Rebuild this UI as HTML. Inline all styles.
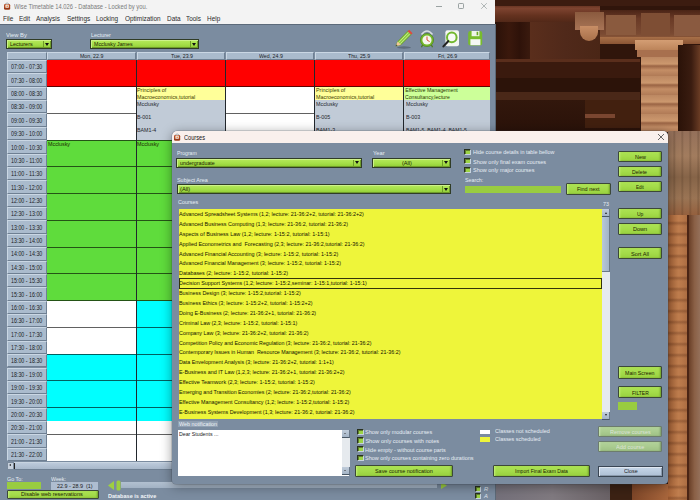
<!DOCTYPE html><html><head><meta charset="utf-8"><style>
*{margin:0;padding:0;box-sizing:border-box}
html,body{width:700px;height:500px;overflow:hidden}
body{position:relative;font-family:"Liberation Sans",sans-serif;background:#2f170c}
.ab{position:absolute}
.t{position:absolute;white-space:nowrap;line-height:1}
.btn{position:absolute;border:1px solid #3c4838;border-radius:1px;
 background:linear-gradient(#ace254,#a4dc4a 50%,#9cd442 85%,#88bc36);
 box-shadow:inset 2px 0 2px -1px #c4f07a, inset -2px 0 2px -1px #6e9e28}
.dis{position:absolute;border:1px solid #6c7c6c;border-radius:1px;background:linear-gradient(#b2d29a,#aacc90 50%,#a2c488 85%,#94b67c);box-shadow:inset 2px 0 2px -1px #c8e4b4, inset -2px 0 2px -1px #7a9a68}
.blu{position:absolute;border:1px solid #3a4654;background:linear-gradient(#c6d6e8,#adbfd4);box-shadow:inset 1px 1px 0 #e0e8f2, inset -1px -1px 0 #8a9aac}
.dd{position:absolute;border:1px solid #303c26;
 background:linear-gradient(#b6ea5c,#a4de48 55%,#90cc34);
 box-shadow:inset 1px 1px 0 #cdf28a, inset -1px -1px 0 #6f9c2a}
.arr{position:absolute;border-left:2.2px solid transparent;border-right:2.2px solid transparent;border-top:3px solid #111}
.sep{position:absolute;width:1px;background:#6f9c2a}
.cb{position:absolute;width:6.4px;height:6.4px;background:#9cd446;border-top:1px solid #283020;border-left:1px solid #283020;border-right:1px solid #c6d2de;border-bottom:1px solid #c6d2de;box-shadow:inset 1px 1px 0 #5e7e2a}
.tc{position:absolute;background:#aabbcd;border-top:1px solid #cad7e4;border-left:1px solid #cad7e4;border-right:1px solid #6e7f92;border-bottom:1px solid #6e7f92}
.hl{position:absolute;height:1px;background:rgba(0,0,0,.62)}
</style></head><body>
<div class="ab" style="left:495.00px;top:0.00px;width:205.00px;height:500.00px;background:#30150b"></div>
<div class="ab" style="left:495.00px;top:0.00px;width:205.00px;height:6.00px;background:#3c1c10"></div>
<div class="ab" style="left:495.00px;top:6.00px;width:105.00px;height:16.00px;background:linear-gradient(#6a3624,#7e4430 15%,#64321f 60%,#522818)"></div>
<div class="ab" style="left:495.00px;top:22.00px;width:35.00px;height:40.00px;background:linear-gradient(90deg,#2a1108,#3a180c 40%,#2e1209 70%,#3a1a0e)"></div>
<div class="ab" style="left:530.00px;top:22.00px;width:70.00px;height:40.00px;background:linear-gradient(90deg,#5a2e1c,#50291a 50%,#4a2616)"></div>
<div class="ab" style="left:495.00px;top:59.00px;width:145.00px;height:3.00px;background:#5a2e1c"></div>
<div class="ab" style="left:495.00px;top:62.00px;width:145.00px;height:16.00px;background:#3a1a0e"></div>
<div class="ab" style="left:495.00px;top:78.00px;width:145.00px;height:14.00px;background:#2c1309"></div>
<div class="ab" style="left:495.00px;top:92.00px;width:145.00px;height:8.00px;background:#4a2818"></div>
<div class="ab" style="left:495.00px;top:100.00px;width:145.00px;height:32.00px;background:linear-gradient(#32170c,#2a1209)"></div>
<div class="ab" style="left:585.00px;top:100.00px;width:55.00px;height:28.00px;background:#42200f"></div>
<div class="ab" style="left:585.00px;top:114.00px;width:30.00px;height:4.00px;background:#7a4630"></div>
<div class="ab" style="left:600.00px;top:10.00px;width:100.00px;height:34.00px;background:linear-gradient(#4a2416,#6a3a26 25%,#7a4a32 70%,#a06840)"></div>
<div class="ab" style="left:606.00px;top:15.00px;width:30.00px;height:20.00px;background:#8a5a3e"></div>
<div class="ab" style="left:641.00px;top:13.00px;width:29.00px;height:23.00px;background:#7e4e34"></div>
<div class="ab" style="left:674.00px;top:15.00px;width:26.00px;height:21.00px;background:#8a5a40"></div>
<div class="ab" style="left:600.00px;top:37.00px;width:100.00px;height:7.00px;background:linear-gradient(#a87048,#8a5434)"></div>
<div class="ab" style="left:575.00px;top:12.00px;width:29.00px;height:18.00px;background:linear-gradient(#8a5a3e,#a87456)"></div>
<div class="ab" style="left:580px;top:26px;width:18px;height:15px;border-radius:0 0 9px 9px;background:linear-gradient(#c88e66,#a8704a)"></div>
<div class="ab" style="left:635.00px;top:40.00px;width:48.00px;height:10.00px;background:linear-gradient(#d49e74,#bc845a)"></div>
<div class="ab" style="left:637.00px;top:50.00px;width:44.00px;height:7.00px;background:#a8704e"></div>
<div class="ab" style="left:641.00px;top:57.00px;width:37.00px;height:75.00px;background:repeating-linear-gradient(#bc8862 0,#cc986e 7px,#9a6444 9px,#c48e66 13px,#b07a56 19px)"></div>
<div class="ab" style="left:678.00px;top:45.00px;width:22.00px;height:87.00px;background:linear-gradient(90deg,#2a1208,#3a1c10 60%,#6a3c24)"></div>
<div class="ab" style="left:668.00px;top:131.00px;width:32.00px;height:84.00px;background:linear-gradient(#94705a,#a27c5e 30%,#866448 55%,#9a7454 80%,#94603e)"></div>
<div class="ab" style="left:668.00px;top:131.00px;width:32.00px;height:84.00px;background:repeating-linear-gradient(90deg,#0000 0,#0000 5px,rgba(50,30,15,.22) 6px,#0000 8px)"></div>
<div class="ab" style="left:668.00px;top:215.00px;width:21.00px;height:285.00px;background:linear-gradient(90deg,#a86438,#c07e4e 50%,#a86a40)"></div>
<div class="ab" style="left:668.00px;top:215.00px;width:21.00px;height:285.00px;background:repeating-linear-gradient(#0000 0,#0000 6px,rgba(70,30,12,.28) 8px,#0000 11px)"></div>
<div class="ab" style="left:687.00px;top:215.00px;width:2.00px;height:285.00px;background:#4a2414"></div>
<div class="ab" style="left:689.00px;top:215.00px;width:11.00px;height:285.00px;background:linear-gradient(90deg,#6a4028,#8a6046 50%,#94705a)"></div>
<div class="ab" style="left:495.00px;top:484.00px;width:115.00px;height:16.00px;background:linear-gradient(90deg,#74707a,#807a80 50%,#6a6266)"></div>
<div class="ab" style="left:610.00px;top:484.00px;width:22.00px;height:16.00px;background:#3c2214"></div>
<div class="ab" style="left:632.00px;top:484.00px;width:36.00px;height:16.00px;background:linear-gradient(90deg,#7e4628,#a8663c)"></div>
<div class="ab" style="left:0.00px;top:0.00px;width:495.00px;height:500.00px;background:#7b8ca0"></div>
<div class="ab" style="left:495.00px;top:24.00px;width:1.00px;height:476.00px;background:#5d6a78"></div>
<div class="ab" style="left:0.00px;top:0.00px;width:495.00px;height:24.00px;background:#f3f3f3"></div>
<div class="ab" style="left:0.00px;top:23.60px;width:495.00px;height:1.00px;background:#5c6a7a"></div>
<svg class="ab" style="left:3.0px;top:1.2999999999999998px" width="9" height="10" viewBox="-1 -1 9 10"><path d="M1.2 2 Q3.1 -0.2 5 2" fill="none" stroke="#a8b0b4" stroke-width="1"/><rect x="0" y="1.9" width="6.2" height="5.6" rx="1.4" fill="#b04a22"/><rect x="0" y="5.6" width="6.2" height="1.9" rx=".8" fill="#983a18"/><rect x="1.4" y="2.6" width="3.4" height="3.1" rx=".5" fill="#f4ece6"/><circle cx="3.2" cy="4.2" r=".8" fill="#f08030"/></svg>
<div class="t" style="left:14.30px;top:4.00px;font-size:6.50px;color:#7a7a7a;transform:scaleX(0.893);transform-origin:0 0;">Wise Timetable 14.026 - Database - Locked by you.</div>
<div class="ab" style="left:436.00px;top:6.00px;width:6.00px;height:0.80px;background:#9aa2a2"></div>
<div class="ab" style="left:458px;top:3px;width:6px;height:6px;border:0.8px solid #9aa2a2;border-radius:1.2px"></div>
<svg class="ab" style="left:480px;top:2px" width="8" height="8"><path d="M1.2 1.2L6.8 6.8M6.8 1.2L1.2 6.8" stroke="#9aa2a2" stroke-width="0.75"/></svg>
<div class="t" style="left:2.70px;top:15.00px;font-size:7.30px;color:#2c2c2c;transform:scaleX(0.880);transform-origin:0 0;">File</div>
<div class="t" style="left:18.90px;top:15.00px;font-size:7.30px;color:#2c2c2c;transform:scaleX(0.880);transform-origin:0 0;">Edit</div>
<div class="t" style="left:36.10px;top:15.00px;font-size:7.30px;color:#2c2c2c;transform:scaleX(0.880);transform-origin:0 0;">Analysis</div>
<div class="t" style="left:67.00px;top:15.00px;font-size:7.30px;color:#2c2c2c;transform:scaleX(0.880);transform-origin:0 0;">Settings</div>
<div class="t" style="left:96.40px;top:15.00px;font-size:7.30px;color:#2c2c2c;transform:scaleX(0.880);transform-origin:0 0;">Locking</div>
<div class="t" style="left:125.00px;top:15.00px;font-size:7.30px;color:#2c2c2c;transform:scaleX(0.880);transform-origin:0 0;">Optimization</div>
<div class="t" style="left:167.00px;top:15.00px;font-size:7.30px;color:#2c2c2c;transform:scaleX(0.880);transform-origin:0 0;">Data</div>
<div class="t" style="left:186.00px;top:15.00px;font-size:7.30px;color:#2c2c2c;transform:scaleX(0.880);transform-origin:0 0;">Tools</div>
<div class="t" style="left:207.00px;top:15.00px;font-size:7.30px;color:#2c2c2c;transform:scaleX(0.880);transform-origin:0 0;">Help</div>
<div class="t" style="left:6.20px;top:32.00px;font-size:6.00px;color:#e6edf4;transform:scaleX(0.965);transform-origin:0 0;">View By</div>
<div class="dd" style="left:6.00px;top:39.10px;width:46.40px;height:9.70px"></div>
<div class="ab" style="left:43.20px;top:41.10px;width:1.00px;height:5.70px;background:#6f9c2a"></div>
<div class="arr" style="left:45.40px;top:42.50px"></div>
<div class="t" style="left:9.90px;top:42.00px;font-size:5.90px;color:#1c2200;transform:scaleX(0.923);transform-origin:0 0;">Lecturers</div>
<div class="t" style="left:90.80px;top:32.00px;font-size:6.00px;color:#e6edf4;transform:scaleX(0.904);transform-origin:0 0;">Lecturer</div>
<div class="dd" style="left:90.10px;top:39.10px;width:108.70px;height:9.70px"></div>
<div class="ab" style="left:189.60px;top:41.10px;width:1.00px;height:5.70px;background:#6f9c2a"></div>
<div class="arr" style="left:191.80px;top:42.50px"></div>
<div class="t" style="left:94.00px;top:42.00px;font-size:5.90px;color:#1c2200;transform:scaleX(0.892);transform-origin:0 0;">Mcclusky James</div>
<svg class="ab" style="left:390px;top:24px" width="105" height="28" viewBox="390 24 105 28">
<ellipse cx="404" cy="47.5" rx="7" ry="1.2" fill="rgba(40,50,60,.35)"/>
<path d="M395.8 46.2 L397.6 41.6 L407.6 31.2 L411.2 34.6 L401.0 44.8 Z" fill="#8ccc3c" stroke="#5a8a22" stroke-width=".5"/>
<path d="M398.6 42.6 L408.6 32.2 M400.2 43.8 L410.0 33.6" stroke="#d8f0b0" stroke-width=".7"/>
<path d="M407.6 31.2 L409.2 29.8 L412.6 33.2 L411.2 34.6 Z" fill="#e24a3a"/>
<path d="M395.8 46.2 L397.6 41.6 L401.0 44.8 Z" fill="#f2c89a"/>
<path d="M395.8 46.2 L396.5 44.4 L397.6 45.4 Z" fill="#333"/>
<path d="M421.5 34.5 Q427 27.5 432.5 34.5" fill="none" stroke="#d8dde2" stroke-width="1.6"/>
<circle cx="427" cy="40" r="6.6" fill="#74b82a" stroke="#4a7a1a" stroke-width=".6"/>
<circle cx="427" cy="40" r="4.6" fill="#f6f6ee"/>
<path d="M427 36.6 V40 L429.6 41.6" stroke="#d23a22" stroke-width=".9" fill="none"/>
<path d="M422.5 45 L421.5 47.2 M431.5 45 L432.5 47.2" stroke="#4a7a1a" stroke-width="1.2"/>
<rect x="445.4" y="30.2" width="13.6" height="16" rx="2" fill="#f4f6f2"/>
<circle cx="451.8" cy="37.4" r="4.8" fill="#f8faf6" stroke="#72b830" stroke-width="2"/>
<path d="M448.2 41.2 L443.4 46.4" stroke="#222" stroke-width="2.1" stroke-linecap="round"/>
<rect x="468.2" y="31" width="14" height="14.4" rx="2.2" fill="#78bc2c"/>
<rect x="471.6" y="31" width="7.8" height="5.2" fill="#eef4e8"/>
<rect x="476.6" y="31.8" width="1.6" height="3.4" fill="#6aa824"/>
<rect x="470.4" y="39.2" width="10" height="6" fill="#f6f8f4"/>
</svg>
<div class="tc" style="left:7px;top:52px;width:40px;height:8px"></div>
<div class="tc" style="left:47px;top:52px;width:89px;height:8px"></div>
<div class="t" style="left:80.32px;top:54.00px;font-size:5.90px;color:#1a1e26;transform:scaleX(0.890);transform-origin:0 0;">Mon, 22.9</div>
<div class="tc" style="left:137px;top:52px;width:88px;height:8px"></div>
<div class="t" style="left:170.50px;top:54.00px;font-size:5.90px;color:#1a1e26;transform:scaleX(0.890);transform-origin:0 0;">Tue, 23.9</div>
<div class="tc" style="left:226px;top:52px;width:88px;height:8px"></div>
<div class="t" style="left:258.58px;top:54.00px;font-size:5.90px;color:#1a1e26;transform:scaleX(0.890);transform-origin:0 0;">Wed, 24.9</div>
<div class="tc" style="left:315px;top:52px;width:88px;height:8px"></div>
<div class="t" style="left:348.41px;top:54.00px;font-size:5.90px;color:#1a1e26;transform:scaleX(0.890);transform-origin:0 0;">Thu, 25.9</div>
<div class="tc" style="left:404px;top:52px;width:86px;height:8px"></div>
<div class="t" style="left:437.87px;top:54.00px;font-size:5.90px;color:#1a1e26;transform:scaleX(0.890);transform-origin:0 0;">Fri, 26.9</div>
<div class="tc" style="left:7px;top:60.00px;width:40px;height:13.37px"></div>
<div class="t" style="left:11.05px;top:64.00px;font-size:6.50px;color:#1a1e26;transform:scaleX(0.817);transform-origin:0 0;">07:00 - 07:30</div>
<div class="tc" style="left:7px;top:73.37px;width:40px;height:13.37px"></div>
<div class="t" style="left:11.05px;top:78.00px;font-size:6.50px;color:#1a1e26;transform:scaleX(0.817);transform-origin:0 0;">07:30 - 08:00</div>
<div class="tc" style="left:7px;top:86.74px;width:40px;height:13.37px"></div>
<div class="t" style="left:11.05px;top:91.00px;font-size:6.50px;color:#1a1e26;transform:scaleX(0.817);transform-origin:0 0;">08:00 - 08:30</div>
<div class="tc" style="left:7px;top:100.11px;width:40px;height:13.37px"></div>
<div class="t" style="left:11.05px;top:104.00px;font-size:6.50px;color:#1a1e26;transform:scaleX(0.817);transform-origin:0 0;">08:30 - 09:00</div>
<div class="tc" style="left:7px;top:113.48px;width:40px;height:13.37px"></div>
<div class="t" style="left:11.05px;top:118.00px;font-size:6.50px;color:#1a1e26;transform:scaleX(0.817);transform-origin:0 0;">09:00 - 09:30</div>
<div class="tc" style="left:7px;top:126.85px;width:40px;height:13.37px"></div>
<div class="t" style="left:11.05px;top:131.00px;font-size:6.50px;color:#1a1e26;transform:scaleX(0.817);transform-origin:0 0;">09:30 - 10:00</div>
<div class="tc" style="left:7px;top:140.22px;width:40px;height:13.37px"></div>
<div class="t" style="left:11.05px;top:145.00px;font-size:6.50px;color:#1a1e26;transform:scaleX(0.817);transform-origin:0 0;">10:00 - 10:30</div>
<div class="tc" style="left:7px;top:153.59px;width:40px;height:13.37px"></div>
<div class="t" style="left:11.05px;top:158.00px;font-size:6.50px;color:#1a1e26;transform:scaleX(0.828);transform-origin:0 0;">10:30 - 11:00</div>
<div class="tc" style="left:7px;top:166.96px;width:40px;height:13.37px"></div>
<div class="t" style="left:11.05px;top:171.00px;font-size:6.50px;color:#1a1e26;transform:scaleX(0.838);transform-origin:0 0;">11:00 - 11:30</div>
<div class="tc" style="left:7px;top:180.33px;width:40px;height:13.37px"></div>
<div class="t" style="left:11.05px;top:185.00px;font-size:6.50px;color:#1a1e26;transform:scaleX(0.828);transform-origin:0 0;">11:30 - 12:00</div>
<div class="tc" style="left:7px;top:193.70px;width:40px;height:13.37px"></div>
<div class="t" style="left:11.05px;top:198.00px;font-size:6.50px;color:#1a1e26;transform:scaleX(0.817);transform-origin:0 0;">12:00 - 12:30</div>
<div class="tc" style="left:7px;top:207.07px;width:40px;height:13.37px"></div>
<div class="t" style="left:11.05px;top:211.00px;font-size:6.50px;color:#1a1e26;transform:scaleX(0.817);transform-origin:0 0;">12:30 - 13:00</div>
<div class="tc" style="left:7px;top:220.44px;width:40px;height:13.37px"></div>
<div class="t" style="left:11.05px;top:225.00px;font-size:6.50px;color:#1a1e26;transform:scaleX(0.817);transform-origin:0 0;">13:00 - 13:30</div>
<div class="tc" style="left:7px;top:233.81px;width:40px;height:13.37px"></div>
<div class="t" style="left:11.05px;top:238.00px;font-size:6.50px;color:#1a1e26;transform:scaleX(0.817);transform-origin:0 0;">13:30 - 14:00</div>
<div class="tc" style="left:7px;top:247.18px;width:40px;height:13.37px"></div>
<div class="t" style="left:11.05px;top:251.00px;font-size:6.50px;color:#1a1e26;transform:scaleX(0.817);transform-origin:0 0;">14:00 - 14:30</div>
<div class="tc" style="left:7px;top:260.55px;width:40px;height:13.37px"></div>
<div class="t" style="left:11.05px;top:265.00px;font-size:6.50px;color:#1a1e26;transform:scaleX(0.817);transform-origin:0 0;">14:30 - 15:00</div>
<div class="tc" style="left:7px;top:273.92px;width:40px;height:13.37px"></div>
<div class="t" style="left:11.05px;top:278.00px;font-size:6.50px;color:#1a1e26;transform:scaleX(0.817);transform-origin:0 0;">15:00 - 15:30</div>
<div class="tc" style="left:7px;top:287.29px;width:40px;height:13.37px"></div>
<div class="t" style="left:11.05px;top:292.00px;font-size:6.50px;color:#1a1e26;transform:scaleX(0.817);transform-origin:0 0;">15:30 - 16:00</div>
<div class="tc" style="left:7px;top:300.66px;width:40px;height:13.37px"></div>
<div class="t" style="left:11.05px;top:305.00px;font-size:6.50px;color:#1a1e26;transform:scaleX(0.817);transform-origin:0 0;">16:00 - 16:30</div>
<div class="tc" style="left:7px;top:314.03px;width:40px;height:13.37px"></div>
<div class="t" style="left:11.05px;top:318.00px;font-size:6.50px;color:#1a1e26;transform:scaleX(0.817);transform-origin:0 0;">16:30 - 17:00</div>
<div class="tc" style="left:7px;top:327.40px;width:40px;height:13.37px"></div>
<div class="t" style="left:11.05px;top:332.00px;font-size:6.50px;color:#1a1e26;transform:scaleX(0.817);transform-origin:0 0;">17:00 - 17:30</div>
<div class="tc" style="left:7px;top:340.77px;width:40px;height:13.37px"></div>
<div class="t" style="left:11.05px;top:345.00px;font-size:6.50px;color:#1a1e26;transform:scaleX(0.817);transform-origin:0 0;">17:30 - 18:00</div>
<div class="tc" style="left:7px;top:354.14px;width:40px;height:13.37px"></div>
<div class="t" style="left:11.05px;top:358.00px;font-size:6.50px;color:#1a1e26;transform:scaleX(0.817);transform-origin:0 0;">18:00 - 18:30</div>
<div class="tc" style="left:7px;top:367.51px;width:40px;height:13.37px"></div>
<div class="t" style="left:11.05px;top:372.00px;font-size:6.50px;color:#1a1e26;transform:scaleX(0.817);transform-origin:0 0;">18:30 - 19:00</div>
<div class="tc" style="left:7px;top:380.88px;width:40px;height:13.37px"></div>
<div class="t" style="left:11.05px;top:385.00px;font-size:6.50px;color:#1a1e26;transform:scaleX(0.817);transform-origin:0 0;">19:00 - 19:30</div>
<div class="tc" style="left:7px;top:394.25px;width:40px;height:13.37px"></div>
<div class="t" style="left:11.05px;top:399.00px;font-size:6.50px;color:#1a1e26;transform:scaleX(0.817);transform-origin:0 0;">19:30 - 20:00</div>
<div class="tc" style="left:7px;top:407.62px;width:40px;height:13.37px"></div>
<div class="t" style="left:11.05px;top:412.00px;font-size:6.50px;color:#1a1e26;transform:scaleX(0.817);transform-origin:0 0;">20:00 - 20:30</div>
<div class="tc" style="left:7px;top:420.99px;width:40px;height:13.37px"></div>
<div class="t" style="left:11.05px;top:425.00px;font-size:6.50px;color:#1a1e26;transform:scaleX(0.817);transform-origin:0 0;">20:30 - 21:00</div>
<div class="tc" style="left:7px;top:434.36px;width:40px;height:13.37px"></div>
<div class="t" style="left:11.05px;top:439.00px;font-size:6.50px;color:#1a1e26;transform:scaleX(0.817);transform-origin:0 0;">21:00 - 21:30</div>
<div class="tc" style="left:7px;top:447.73px;width:40px;height:13.37px"></div>
<div class="t" style="left:11.05px;top:452.00px;font-size:6.50px;color:#1a1e26;transform:scaleX(0.817);transform-origin:0 0;">21:30 - 22:00</div>
<div class="ab" style="left:47.00px;top:60.00px;width:89.00px;height:26.74px;background:#ff0000"></div>
<div class="ab" style="left:47.00px;top:86.74px;width:89.00px;height:53.48px;background:#ffffff"></div>
<div class="ab" style="left:47.00px;top:140.22px;width:89.00px;height:160.44px;background:#5fdc3c"></div>
<div class="ab" style="left:47.00px;top:300.66px;width:89.00px;height:53.48px;background:#ffffff"></div>
<div class="ab" style="left:47.00px;top:354.14px;width:89.00px;height:66.85px;background:#00ffff"></div>
<div class="ab" style="left:47.00px;top:420.99px;width:89.00px;height:40.11px;background:#ffffff"></div>
<div class="ab" style="left:137.00px;top:60.00px;width:88.00px;height:26.74px;background:#ff0000"></div>
<div class="ab" style="left:137.00px;top:86.74px;width:88.00px;height:53.48px;background:#c1cbd7"></div>
<div class="ab" style="left:137.00px;top:140.22px;width:88.00px;height:160.44px;background:#5fdc3c"></div>
<div class="ab" style="left:137.00px;top:300.66px;width:88.00px;height:120.33px;background:#00ffff"></div>
<div class="ab" style="left:137.00px;top:420.99px;width:88.00px;height:40.11px;background:#ffffff"></div>
<div class="ab" style="left:226.00px;top:60.00px;width:88.00px;height:26.74px;background:#ff0000"></div>
<div class="ab" style="left:226.00px;top:86.74px;width:88.00px;height:374.36px;background:#ffffff"></div>
<div class="ab" style="left:315.00px;top:60.00px;width:88.00px;height:26.74px;background:#ff0000"></div>
<div class="ab" style="left:315.00px;top:86.74px;width:88.00px;height:53.48px;background:#c1cbd7"></div>
<div class="ab" style="left:315.00px;top:140.22px;width:88.00px;height:320.88px;background:#ffffff"></div>
<div class="ab" style="left:404.00px;top:60.00px;width:86.00px;height:26.74px;background:#ff0000"></div>
<div class="ab" style="left:404.00px;top:86.74px;width:86.00px;height:53.48px;background:#c1cbd7"></div>
<div class="ab" style="left:404.00px;top:140.22px;width:86.00px;height:320.88px;background:#ffffff"></div>
<div class="ab" style="left:137.00px;top:86.74px;width:88.00px;height:13.26px;background:#ffff99"></div>
<div class="ab" style="left:315.00px;top:86.74px;width:88.00px;height:13.26px;background:#ffff99"></div>
<div class="ab" style="left:404.00px;top:86.74px;width:86.00px;height:13.26px;background:#ccff99"></div>
<div class="hl" style="left:47px;top:86.24px;width:89px"></div>
<div class="hl" style="left:137px;top:86.24px;width:88px"></div>
<div class="hl" style="left:226px;top:86.24px;width:88px"></div>
<div class="hl" style="left:315px;top:86.24px;width:88px"></div>
<div class="hl" style="left:404px;top:86.24px;width:86px"></div>
<div class="hl" style="left:47px;top:112.98px;width:89px"></div>
<div class="hl" style="left:226px;top:112.98px;width:88px"></div>
<div class="hl" style="left:47px;top:139.72px;width:89px"></div>
<div class="hl" style="left:137px;top:139.72px;width:88px"></div>
<div class="hl" style="left:226px;top:139.72px;width:88px"></div>
<div class="hl" style="left:315px;top:139.72px;width:88px"></div>
<div class="hl" style="left:404px;top:139.72px;width:86px"></div>
<div class="hl" style="left:47px;top:166.46px;width:89px"></div>
<div class="hl" style="left:137px;top:166.46px;width:88px"></div>
<div class="hl" style="left:226px;top:166.46px;width:88px"></div>
<div class="hl" style="left:315px;top:166.46px;width:88px"></div>
<div class="hl" style="left:404px;top:166.46px;width:86px"></div>
<div class="hl" style="left:47px;top:193.20px;width:89px"></div>
<div class="hl" style="left:137px;top:193.20px;width:88px"></div>
<div class="hl" style="left:226px;top:193.20px;width:88px"></div>
<div class="hl" style="left:315px;top:193.20px;width:88px"></div>
<div class="hl" style="left:404px;top:193.20px;width:86px"></div>
<div class="hl" style="left:47px;top:219.94px;width:89px"></div>
<div class="hl" style="left:137px;top:219.94px;width:88px"></div>
<div class="hl" style="left:226px;top:219.94px;width:88px"></div>
<div class="hl" style="left:315px;top:219.94px;width:88px"></div>
<div class="hl" style="left:404px;top:219.94px;width:86px"></div>
<div class="hl" style="left:47px;top:246.68px;width:89px"></div>
<div class="hl" style="left:137px;top:246.68px;width:88px"></div>
<div class="hl" style="left:226px;top:246.68px;width:88px"></div>
<div class="hl" style="left:315px;top:246.68px;width:88px"></div>
<div class="hl" style="left:404px;top:246.68px;width:86px"></div>
<div class="hl" style="left:47px;top:273.42px;width:89px"></div>
<div class="hl" style="left:137px;top:273.42px;width:88px"></div>
<div class="hl" style="left:226px;top:273.42px;width:88px"></div>
<div class="hl" style="left:315px;top:273.42px;width:88px"></div>
<div class="hl" style="left:404px;top:273.42px;width:86px"></div>
<div class="hl" style="left:47px;top:300.16px;width:89px"></div>
<div class="hl" style="left:137px;top:300.16px;width:88px"></div>
<div class="hl" style="left:226px;top:300.16px;width:88px"></div>
<div class="hl" style="left:315px;top:300.16px;width:88px"></div>
<div class="hl" style="left:404px;top:300.16px;width:86px"></div>
<div class="hl" style="left:47px;top:326.90px;width:89px"></div>
<div class="hl" style="left:137px;top:326.90px;width:88px"></div>
<div class="hl" style="left:226px;top:326.90px;width:88px"></div>
<div class="hl" style="left:315px;top:326.90px;width:88px"></div>
<div class="hl" style="left:404px;top:326.90px;width:86px"></div>
<div class="hl" style="left:47px;top:353.64px;width:89px"></div>
<div class="hl" style="left:137px;top:353.64px;width:88px"></div>
<div class="hl" style="left:226px;top:353.64px;width:88px"></div>
<div class="hl" style="left:315px;top:353.64px;width:88px"></div>
<div class="hl" style="left:404px;top:353.64px;width:86px"></div>
<div class="hl" style="left:47px;top:380.38px;width:89px"></div>
<div class="hl" style="left:137px;top:380.38px;width:88px"></div>
<div class="hl" style="left:226px;top:380.38px;width:88px"></div>
<div class="hl" style="left:315px;top:380.38px;width:88px"></div>
<div class="hl" style="left:404px;top:380.38px;width:86px"></div>
<div class="hl" style="left:47px;top:407.12px;width:89px"></div>
<div class="hl" style="left:137px;top:407.12px;width:88px"></div>
<div class="hl" style="left:226px;top:407.12px;width:88px"></div>
<div class="hl" style="left:315px;top:407.12px;width:88px"></div>
<div class="hl" style="left:404px;top:407.12px;width:86px"></div>
<div class="hl" style="left:47px;top:433.86px;width:89px"></div>
<div class="hl" style="left:137px;top:433.86px;width:88px"></div>
<div class="hl" style="left:226px;top:433.86px;width:88px"></div>
<div class="hl" style="left:315px;top:433.86px;width:88px"></div>
<div class="hl" style="left:404px;top:433.86px;width:86px"></div>
<div class="ab" style="left:136.00px;top:60.00px;width:1.00px;height:401.00px;background:rgba(0,0,0,.72)"></div>
<div class="ab" style="left:225.00px;top:60.00px;width:1.00px;height:401.00px;background:rgba(0,0,0,.72)"></div>
<div class="ab" style="left:314.00px;top:60.00px;width:1.00px;height:401.00px;background:rgba(0,0,0,.72)"></div>
<div class="ab" style="left:403.00px;top:60.00px;width:1.00px;height:401.00px;background:rgba(0,0,0,.72)"></div>
<div class="t" style="left:136.80px;top:88.00px;font-size:5.30px;color:#3c3c00;transform:scaleX(1.018);transform-origin:0 0;">Principles of</div>
<div class="t" style="left:136.80px;top:95.00px;font-size:5.30px;color:#3c3c00;transform:scaleX(1.013);transform-origin:0 0;">Macroeconomics,tutorial</div>
<div class="t" style="left:136.80px;top:102.00px;font-size:5.30px;color:#23262c;transform:scaleX(1.010);transform-origin:0 0;">Mcclusky</div>
<div class="t" style="left:315.60px;top:88.00px;font-size:5.30px;color:#3c3c00;transform:scaleX(1.018);transform-origin:0 0;">Principles of</div>
<div class="t" style="left:315.60px;top:95.00px;font-size:5.30px;color:#3c3c00;transform:scaleX(1.013);transform-origin:0 0;">Macroeconomics,tutorial</div>
<div class="t" style="left:315.60px;top:102.00px;font-size:5.30px;color:#23262c;transform:scaleX(1.010);transform-origin:0 0;">Mcclusky</div>
<div class="t" style="left:136.80px;top:115.00px;font-size:5.60px;color:#23262c;transform:scaleX(0.950);transform-origin:0 0;">B-001</div>
<div class="t" style="left:136.80px;top:128.00px;font-size:5.60px;color:#23262c;transform:scaleX(0.949);transform-origin:0 0;">BAM1-4</div>
<div class="t" style="left:315.60px;top:115.00px;font-size:5.60px;color:#23262c;transform:scaleX(0.950);transform-origin:0 0;">B-005</div>
<div class="t" style="left:315.60px;top:128.00px;font-size:5.60px;color:#23262c;transform:scaleX(0.949);transform-origin:0 0;">BAM1-3</div>
<div class="t" style="left:405.20px;top:88.00px;font-size:5.30px;color:#2a3600;">Effective Management</div>
<div class="t" style="left:405.20px;top:95.00px;font-size:5.30px;color:#2a3600;transform:scaleX(0.971);transform-origin:0 0;">Consultancy,lecture</div>
<div class="t" style="left:405.50px;top:102.00px;font-size:5.30px;color:#23262c;transform:scaleX(1.010);transform-origin:0 0;">Mcclusky</div>
<div class="t" style="left:405.50px;top:115.00px;font-size:5.60px;color:#23262c;transform:scaleX(0.950);transform-origin:0 0;">B-003</div>
<div class="t" style="left:405.50px;top:128.00px;font-size:5.60px;color:#23262c;transform:scaleX(0.910);transform-origin:0 0;">BAM1-5, BAM1-4, BAM1-5</div>
<div class="t" style="left:48.00px;top:142.00px;font-size:5.30px;color:#1c2a00;transform:scaleX(1.010);transform-origin:0 0;">Mcclusky</div>
<div class="t" style="left:136.80px;top:142.00px;font-size:5.30px;color:#1c2a00;transform:scaleX(1.010);transform-origin:0 0;">Mcclusky</div>
<div class="ab" style="left:7.00px;top:462.20px;width:483.00px;height:7.40px;background:#aabbcd;border-top:1px solid #c8d4e0;border-bottom:1px solid #6e7f92"></div>
<div class="ab" style="left:7.00px;top:462.20px;width:7.00px;height:7.40px;background:#c6d0dc;border:1px solid #7a8a9c"></div>
<div class="ab" style="left:9.3px;top:464.4px;border-top:1.6px solid transparent;border-bottom:1.6px solid transparent;border-right:2.2px solid #222"></div>
<div class="ab" style="left:14.00px;top:462.60px;width:1.00px;height:6.80px;background:#222"></div>
<div class="ab" style="left:15.00px;top:463.00px;width:475.00px;height:6.00px;background:linear-gradient(#bccadb,#a8b8ca)"></div>
<div class="t" style="left:6.50px;top:477.00px;font-size:5.80px;color:#e6edf4;transform:scaleX(0.930);transform-origin:0 0;">Go To:</div>
<div class="ab" style="left:7.00px;top:481.60px;width:34.00px;height:7.70px;background:#99cc40"></div>
<div class="t" style="left:51.10px;top:477.00px;font-size:5.80px;color:#e6edf4;transform:scaleX(0.912);transform-origin:0 0;">Week:</div>
<div class="ab" style="left:51.00px;top:482.00px;width:47.00px;height:7.60px;background:#aebdd0"></div>
<div class="t" style="left:57.00px;top:484.00px;font-size:5.80px;color:#222;transform:scaleX(0.936);transform-origin:0 0;">22.9 - 28.9 &nbsp;(1)</div>
<div class="btn" style="left:6.5px;top:490.2px;width:92px;height:9px"></div>
<div class="t" style="left:20.90px;top:492.00px;font-size:5.80px;color:#1c2200;transform:scaleX(0.954);transform-origin:0 0;">Disable web reservations</div>
<svg class="ab" style="left:107px;top:480px" width="16" height="11"><path d="M1 5.5 L7 1 L7 10Z" fill="#9ed040"/><rect x="9.5" y="0.5" width="4" height="10" rx="1.5" fill="#9ed040"/></svg>
<div class="ab" style="left:121.00px;top:482.00px;width:316.00px;height:6.00px;background:linear-gradient(#b2c0d0,#a2b2c4)"></div>
<svg class="ab" style="left:440px;top:481px" width="8" height="9"><path d="M1 1 L7 4.5 L1 8Z" fill="#9ed040"/></svg>
<div class="t" style="left:108.40px;top:493.00px;font-size:6.00px;color:#f0f4f8;font-weight:bold;transform:scaleX(0.928);transform-origin:0 0;">Database is active</div>
<div class="cb" style="left:475px;top:485.5px"></div><div class="cb" style="left:475px;top:493px"></div>
<div class="t" style="left:484.00px;top:487.00px;font-size:5.80px;color:#e0e8f0;font-style:italic">R</div>
<div class="t" style="left:484.00px;top:494.00px;font-size:5.80px;color:#e0e8f0;font-style:italic">A</div>
<div class="ab" style="left:171.7px;top:131px;width:496.6px;height:352.6px;border-radius:5px 5px 4px 4px;box-shadow:0 2px 12px rgba(0,0,0,.4),0 0 0 0.5px rgba(60,70,80,.35);background:#7b8ca0;overflow:hidden"><div class="ab" style="left:0;top:0;width:500px;height:12px;background:#f9f0ed"></div></div>
<svg class="ab" style="left:172.8px;top:131.6px" width="9" height="10" viewBox="-1 -1 9 10"><path d="M1.2 2 Q3.1 -0.2 5 2" fill="none" stroke="#a8b0b4" stroke-width="1"/><rect x="0" y="1.9" width="6.2" height="5.6" rx="1.4" fill="#b04a22"/><rect x="0" y="5.6" width="6.2" height="1.9" rx=".8" fill="#983a18"/><rect x="1.4" y="2.6" width="3.4" height="3.1" rx=".5" fill="#f4ece6"/><circle cx="3.2" cy="4.2" r=".8" fill="#f08030"/></svg>
<div class="t" style="left:183.70px;top:135.00px;font-size:6.30px;color:#111;transform:scaleX(0.895);transform-origin:0 0;">Courses</div>
<svg class="ab" style="left:657px;top:133px" width="8" height="8"><path d="M1 1L7 7M7 1L1 7" stroke="#555" stroke-width="0.9"/></svg>
<div class="t" style="left:176.90px;top:151.00px;font-size:5.60px;color:#e6edf4;transform:scaleX(0.922);transform-origin:0 0;">Program</div>
<div class="dd" style="left:176.20px;top:158.00px;width:186.10px;height:9.90px"></div>
<div class="ab" style="left:353.10px;top:160.00px;width:1.00px;height:5.90px;background:#6f9c2a"></div>
<div class="arr" style="left:355.30px;top:161.40px"></div>
<div class="t" style="left:180.10px;top:161.00px;font-size:5.90px;color:#1c2200;transform:scaleX(0.909);transform-origin:0 0;">undergraduate</div>
<div class="t" style="left:373.00px;top:151.00px;font-size:5.60px;color:#e6edf4;transform:scaleX(1.025);transform-origin:0 0;">Year</div>
<div class="dd" style="left:371.90px;top:158.00px;width:79.00px;height:9.90px"></div>
<div class="ab" style="left:441.70px;top:160.00px;width:1.00px;height:5.90px;background:#6f9c2a"></div>
<div class="arr" style="left:443.90px;top:161.40px"></div>
<div class="t" style="left:401.92px;top:161.00px;font-size:5.90px;color:#1c2200;transform:scaleX(0.950);transform-origin:0 0;">(All)</div>
<div class="t" style="left:176.90px;top:178.00px;font-size:5.60px;color:#e6edf4;transform:scaleX(0.970);transform-origin:0 0;">Subject Area</div>
<div class="dd" style="left:176.50px;top:184.40px;width:274.40px;height:10.00px"></div>
<div class="ab" style="left:441.70px;top:186.40px;width:1.00px;height:6.00px;background:#6f9c2a"></div>
<div class="arr" style="left:443.90px;top:187.80px"></div>
<div class="t" style="left:180.00px;top:187.00px;font-size:5.90px;color:#1c2200;transform:scaleX(0.973);transform-origin:0 0;">(All)</div>
<div class="cb" style="left:464.4px;top:148.6px"></div>
<div class="t" style="left:472.70px;top:150.00px;font-size:5.60px;color:#e6edf4;transform:scaleX(0.961);transform-origin:0 0;">Hide course details in table bellow</div>
<div class="cb" style="left:464.4px;top:158px"></div>
<div class="t" style="left:472.70px;top:160.00px;font-size:5.60px;color:#e6edf4;transform:scaleX(0.988);transform-origin:0 0;">Show only final exam courses</div>
<div class="cb" style="left:464.4px;top:166.6px"></div>
<div class="t" style="left:472.70px;top:168.00px;font-size:5.60px;color:#e6edf4;transform:scaleX(0.983);transform-origin:0 0;">Show only major courses</div>
<div class="t" style="left:465.00px;top:178.00px;font-size:5.60px;color:#e6edf4;transform:scaleX(0.948);transform-origin:0 0;">Search:</div>
<div class="ab" style="left:464.80px;top:185.50px;width:96.50px;height:7.30px;background:#99cc40"></div>
<div class="btn" style="left:566.00px;top:183.20px;width:44.70px;height:11.50px"></div>
<div class="t" style="left:577.10px;top:186.00px;font-size:6.20px;color:#1c2200;transform:scaleX(0.882);transform-origin:0 0;">Find next</div>
<div class="btn" style="left:617.70px;top:151.20px;width:44.50px;height:11.30px"></div>
<div class="t" style="left:634.55px;top:154.00px;font-size:6.20px;color:#1c2200;transform:scaleX(0.870);transform-origin:0 0;">New</div>
<div class="btn" style="left:617.70px;top:166.20px;width:44.50px;height:11.30px"></div>
<div class="t" style="left:632.45px;top:169.00px;font-size:6.20px;color:#1c2200;transform:scaleX(0.837);transform-origin:0 0;">Delete</div>
<div class="btn" style="left:617.70px;top:181.20px;width:44.50px;height:11.30px"></div>
<div class="t" style="left:636.05px;top:184.00px;font-size:6.20px;color:#1c2200;transform:scaleX(0.730);transform-origin:0 0;">Edit</div>
<div class="btn" style="left:617.80px;top:207.80px;width:44.40px;height:11.60px"></div>
<div class="t" style="left:636.80px;top:211.00px;font-size:6.20px;color:#1c2200;transform:scaleX(0.808);transform-origin:0 0;">Up</div>
<div class="btn" style="left:617.80px;top:222.60px;width:44.40px;height:12.00px"></div>
<div class="t" style="left:632.90px;top:226.00px;font-size:6.20px;color:#1c2200;transform:scaleX(0.896);transform-origin:0 0;">Down</div>
<div class="btn" style="left:617.80px;top:247.40px;width:44.40px;height:12.00px"></div>
<div class="t" style="left:631.00px;top:251.00px;font-size:6.20px;color:#1c2200;transform:scaleX(0.916);transform-origin:0 0;">Sort All</div>
<div class="btn" style="left:617.80px;top:366.20px;width:44.40px;height:12.40px"></div>
<div class="t" style="left:625.20px;top:370.00px;font-size:6.20px;color:#1c2200;transform:scaleX(0.850);transform-origin:0 0;">Main Screen</div>
<div class="btn" style="left:617.80px;top:386.20px;width:44.40px;height:12.20px"></div>
<div class="t" style="left:631.60px;top:390.00px;font-size:6.20px;color:#1c2200;transform:scaleX(0.804);transform-origin:0 0;">FILTER</div>
<div class="ab" style="left:618.40px;top:402.00px;width:18.20px;height:7.50px;background:#99cc40"></div>
<div class="t" style="left:178.20px;top:200.00px;font-size:5.60px;color:#e6edf4;transform:scaleX(0.964);transform-origin:0 0;">Courses</div>
<div class="t" style="left:603.30px;top:201.00px;font-size:6.20px;color:#e6edf4;transform:scaleX(0.870);transform-origin:0 0;">73</div>
<div class="ab" style="left:178.90px;top:209.10px;width:423.50px;height:210.30px;background:#eef53a"></div>
<div class="t" style="left:179.40px;top:211.00px;font-size:6.00px;color:#121200;transform:scaleX(0.903);transform-origin:0 0;">Advanced Spreadsheet Systems (1,2; lecture: 21-36:2+2, tutorial: 21-36:2+2)</div>
<div class="t" style="left:179.40px;top:221.00px;font-size:6.00px;color:#121200;transform:scaleX(0.902);transform-origin:0 0;">Advanced Business Computing (1,3; lecture: 21-36:2, tutorial: 21-36:2)</div>
<div class="t" style="left:179.40px;top:231.00px;font-size:6.00px;color:#121200;transform:scaleX(0.918);transform-origin:0 0;">Aspects of Business Law (1,2; lecture: 1-15:2, tutorial: 1-15:1)</div>
<div class="t" style="left:179.40px;top:241.00px;font-size:6.00px;color:#121200;transform:scaleX(0.897);transform-origin:0 0;">Applied Econometrics and &nbsp;Forecasting (2,3; lecture: 21-36:2,tutorial: 21-36:2)</div>
<div class="t" style="left:179.40px;top:251.00px;font-size:6.00px;color:#121200;transform:scaleX(0.906);transform-origin:0 0;">Advanced Financial Accounting (3; lecture: 1-15:2, tutorial: 1-15:2)</div>
<div class="t" style="left:179.40px;top:260.00px;font-size:6.00px;color:#121200;transform:scaleX(0.893);transform-origin:0 0;">Advanced Financial Management (3; lecture: 1-15:2, tutorial: 1-15:2)</div>
<div class="t" style="left:179.40px;top:270.00px;font-size:6.00px;color:#121200;transform:scaleX(0.900);transform-origin:0 0;">Databases (2; lecture: 1-15:2, tutorial: 1-15:2)</div>
<div class="t" style="left:179.40px;top:280.00px;font-size:6.00px;color:#121200;transform:scaleX(0.897);transform-origin:0 0;">Decision Support Systems (1,2; lecture: 1-15:2,seminar: 1-15:1,tutorial: 1-15:1)</div>
<div class="t" style="left:179.40px;top:290.00px;font-size:6.00px;color:#121200;transform:scaleX(0.900);transform-origin:0 0;">Business Design (3; lecture: 1-15:2,tutorial: 1-15:2)</div>
<div class="t" style="left:179.40px;top:300.00px;font-size:6.00px;color:#121200;transform:scaleX(0.899);transform-origin:0 0;">Business Ethics (3; lecture: 1-15:2+2, tutorial: 1-15:2+2)</div>
<div class="t" style="left:179.40px;top:310.00px;font-size:6.00px;color:#121200;transform:scaleX(0.893);transform-origin:0 0;">Doing E-Business (2; lecture: 21-36:2+1, tutorial: 21-36:2)</div>
<div class="t" style="left:179.40px;top:320.00px;font-size:6.00px;color:#121200;transform:scaleX(0.896);transform-origin:0 0;">Criminal Law (2,3; lecture: 1-15:2, tutorial: 1-15:1)</div>
<div class="t" style="left:179.40px;top:330.00px;font-size:6.00px;color:#121200;transform:scaleX(0.898);transform-origin:0 0;">Company Law (3; lecture: 21-36:2+2, tutorial: 21-36:2)</div>
<div class="t" style="left:179.40px;top:340.00px;font-size:6.00px;color:#121200;transform:scaleX(0.880);transform-origin:0 0;">Competition Policy and Economic Regulation (3; lecture: 21-36:2, tutorial: 21-36:2)</div>
<div class="t" style="left:179.40px;top:349.00px;font-size:6.00px;color:#121200;transform:scaleX(0.889);transform-origin:0 0;">Contemporary Issues in Human &nbsp;Resource Management (3; lecture: 21-36:2, tutorial: 21-36:2)</div>
<div class="t" style="left:179.40px;top:359.00px;font-size:6.00px;color:#121200;transform:scaleX(0.891);transform-origin:0 0;">Data Envelopment Analysis (3; lecture: 21-36:2+2, tutorial: 1:1+1)</div>
<div class="t" style="left:179.40px;top:369.00px;font-size:6.00px;color:#121200;transform:scaleX(0.898);transform-origin:0 0;">E-Business and IT Law (1,2,3; lecture: 21-36:2+1, tutorial: 21-36:2+2)</div>
<div class="t" style="left:179.40px;top:379.00px;font-size:6.00px;color:#121200;transform:scaleX(0.910);transform-origin:0 0;">Effective Teamwork (2,3; lecture: 1-15:2, tutorial: 1-15:2)</div>
<div class="t" style="left:179.40px;top:389.00px;font-size:6.00px;color:#121200;transform:scaleX(0.886);transform-origin:0 0;">Emerging and Transition Economies (2; lecture: 21-36:2,tutorial: 21-36:2)</div>
<div class="t" style="left:179.40px;top:399.00px;font-size:6.00px;color:#121200;transform:scaleX(0.896);transform-origin:0 0;">Effective Management Consultancy (1,2; lecture: 1-15:2,tutorial: 1-15:2)</div>
<div class="t" style="left:179.40px;top:409.00px;font-size:6.00px;color:#121200;transform:scaleX(0.895);transform-origin:0 0;">E-Business Systems Development (1,3; lecture: 21-36:2, tutorial: 21-36:2)</div>
<div class="ab" style="left:179.00px;top:278.00px;width:423.00px;height:11.00px;border:1px solid #34340a"></div>
<div class="ab" style="left:602.40px;top:209.10px;width:7.90px;height:210.40px;background:#e6eaee"></div>
<div class="ab" style="left:602.40px;top:209.40px;width:7.90px;height:7.20px;background:linear-gradient(#c0ccda,#a4b4c6);border-bottom:1px solid #4a5866;border-right:1px solid #6a7888"></div>
<div class="ab" style="left:604.7px;top:211.8px;border-left:1.6px solid transparent;border-right:1.6px solid transparent;border-bottom:2.2px solid #222"></div>
<div class="ab" style="left:602.40px;top:216.60px;width:7.90px;height:55.90px;background:linear-gradient(90deg,#b8c8da,#a2b4c8);border-right:1px solid #6a7888;border-bottom:1px solid #6a7888"></div>
<div class="ab" style="left:602.40px;top:411.50px;width:7.90px;height:8.00px;background:linear-gradient(#c0ccda,#a4b4c6);border-bottom:1px solid #4a5866;border-right:1px solid #6a7888"></div>
<div class="ab" style="left:604.7px;top:414.3px;border-left:1.6px solid transparent;border-right:1.6px solid transparent;border-top:2.2px solid #222"></div>
<div class="ab" style="left:178.00px;top:420.60px;width:39.70px;height:6.90px;background:#90a0b2"></div>
<div class="t" style="left:178.60px;top:422.00px;font-size:5.60px;color:#eef2f6;transform:scaleX(0.959);transform-origin:0 0;">Web notification</div>
<div class="ab" style="left:177.70px;top:429.70px;width:171.70px;height:46.30px;background:#fff"></div>
<div class="t" style="left:178.60px;top:432.00px;font-size:5.80px;color:#222;transform:scaleX(0.905);transform-origin:0 0;">Dear Students ...</div>
<div class="ab" style="left:341.50px;top:429.70px;width:8.30px;height:45.80px;background:#e6eaee"></div>
<div class="ab" style="left:341.50px;top:430.00px;width:8.30px;height:7.60px;background:linear-gradient(#c0ccda,#a4b4c6);border-bottom:1px solid #4a5866;border-right:1px solid #6a7888"></div>
<div class="ab" style="left:344.3px;top:432.6px;border-left:1.4px solid transparent;border-right:1.4px solid transparent;border-bottom:1.8px solid #333"></div>
<div class="ab" style="left:341.50px;top:467.30px;width:8.30px;height:7.70px;background:linear-gradient(#c0ccda,#a4b4c6);border-bottom:1px solid #4a5866;border-right:1px solid #6a7888"></div>
<div class="ab" style="left:344.3px;top:470px;border-left:1.4px solid transparent;border-right:1.4px solid transparent;border-top:1.8px solid #333"></div>
<div class="cb" style="left:357.2px;top:429px"></div>
<div class="t" style="left:365.40px;top:430.00px;font-size:5.60px;color:#e6edf4;transform:scaleX(0.977);transform-origin:0 0;">Show only modular courses</div>
<div class="cb" style="left:357.2px;top:437.3px"></div>
<div class="t" style="left:365.40px;top:439.00px;font-size:5.60px;color:#e6edf4;">Show only courses with notes</div>
<div class="cb" style="left:357.2px;top:446px"></div>
<div class="t" style="left:365.40px;top:448.00px;font-size:5.60px;color:#e6edf4;transform:scaleX(0.970);transform-origin:0 0;">Hide empty - without course parts</div>
<div class="cb" style="left:357.2px;top:454.8px"></div>
<div class="t" style="left:365.40px;top:456.00px;font-size:5.60px;color:#e6edf4;transform:scaleX(0.977);transform-origin:0 0;">Show only courses containing zero durations</div>
<div class="btn" style="left:355.40px;top:465.00px;width:97.50px;height:12.00px"></div>
<div class="t" style="left:375.25px;top:468.00px;font-size:6.20px;color:#1c2200;transform:scaleX(0.878);transform-origin:0 0;">Save course notification</div>
<div class="ab" style="left:480.00px;top:429.60px;width:10.30px;height:4.60px;background:#fff"></div>
<div class="t" style="left:494.90px;top:429.00px;font-size:5.60px;color:#e6edf4;transform:scaleX(0.973);transform-origin:0 0;">Classes not scheduled</div>
<div class="ab" style="left:480.00px;top:437.00px;width:10.30px;height:4.70px;background:#eef53a"></div>
<div class="t" style="left:494.90px;top:437.00px;font-size:5.60px;color:#e6edf4;transform:scaleX(0.972);transform-origin:0 0;">Classes scheduled</div>
<div class="btn" style="left:492.60px;top:465.00px;width:97.80px;height:12.00px"></div>
<div class="t" style="left:515.00px;top:468.00px;font-size:6.20px;color:#1c2200;transform:scaleX(0.814);transform-origin:0 0;">Import Final Exam Data</div>
<div class="dis" style="left:598.00px;top:426.00px;width:64.00px;height:11.20px"></div>
<div class="t" style="left:609.60px;top:429.00px;font-size:6.20px;color:#dde4da;transform:scaleX(0.877);transform-origin:0 0;">Remove courses</div>
<div class="dis" style="left:598.00px;top:441.00px;width:64.00px;height:11.20px"></div>
<div class="t" style="left:615.85px;top:444.00px;font-size:6.20px;color:#dde4da;transform:scaleX(0.902);transform-origin:0 0;">Add course</div>
<div class="blu" style="left:598.00px;top:465.50px;width:64.70px;height:11.50px"></div>
<div class="t" style="left:623.50px;top:468.00px;font-size:6.20px;color:#222;transform:scaleX(0.864);transform-origin:0 0;">Close</div>
</body></html>
